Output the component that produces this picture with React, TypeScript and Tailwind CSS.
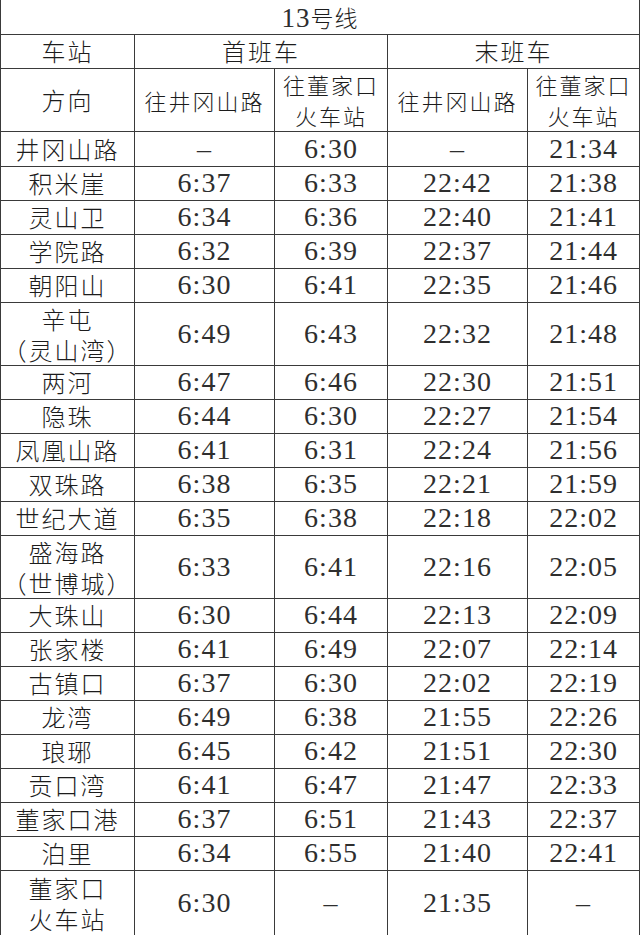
import React from 'react';

type Row = { name: string[]; times: string[]; h: string };

const DASH = '–';

const rows: Row[] = [
  { name: ['井冈山路'], times: [DASH, '6:30', DASH, '21:34'], h: 'h-[35px]' },
  { name: ['积米崖'], times: ['6:37', '6:33', '22:42', '21:38'], h: 'h-[34px]' },
  { name: ['灵山卫'], times: ['6:34', '6:36', '22:40', '21:41'], h: 'h-[34px]' },
  { name: ['学院路'], times: ['6:32', '6:39', '22:37', '21:44'], h: 'h-[34px]' },
  { name: ['朝阳山'], times: ['6:30', '6:41', '22:35', '21:46'], h: 'h-[34px]' },
  { name: ['辛屯', '（灵山湾）'], times: ['6:49', '6:43', '22:32', '21:48'], h: 'h-[62px]' },
  { name: ['两河'], times: ['6:47', '6:46', '22:30', '21:51'], h: 'h-[34px]' },
  { name: ['隐珠'], times: ['6:44', '6:30', '22:27', '21:54'], h: 'h-[34px]' },
  { name: ['凤凰山路'], times: ['6:41', '6:31', '22:24', '21:56'], h: 'h-[34px]' },
  { name: ['双珠路'], times: ['6:38', '6:35', '22:21', '21:59'], h: 'h-[34px]' },
  { name: ['世纪大道'], times: ['6:35', '6:38', '22:18', '22:02'], h: 'h-[34px]' },
  { name: ['盛海路', '（世博城）'], times: ['6:33', '6:41', '22:16', '22:05'], h: 'h-[61px]' },
  { name: ['大珠山'], times: ['6:30', '6:44', '22:13', '22:09'], h: 'h-[34px]' },
  { name: ['张家楼'], times: ['6:41', '6:49', '22:07', '22:14'], h: 'h-[34px]' },
  { name: ['古镇口'], times: ['6:37', '6:30', '22:02', '22:19'], h: 'h-[34px]' },
  { name: ['龙湾'], times: ['6:49', '6:38', '21:55', '22:26'], h: 'h-[34px]' },
  { name: ['琅琊'], times: ['6:45', '6:42', '21:51', '22:30'], h: 'h-[34px]' },
  { name: ['贡口湾'], times: ['6:41', '6:47', '21:47', '22:33'], h: 'h-[34px]' },
  { name: ['董家口港'], times: ['6:37', '6:51', '21:43', '22:37'], h: 'h-[34px]' },
  { name: ['泊里'], times: ['6:34', '6:55', '21:40', '22:41'], h: 'h-[34px]' },
  { name: ['董家口', '火车站'], times: ['6:30', DASH, '21:35', DASH], h: 'h-[66px]' },
];

const cjk = "font-['Noto_Sans_CJK_SC','Noto_Sans_CJK_JP',sans-serif] font-light";
const num = "font-['Liberation_Serif','Times_New_Roman',serif] text-[#2e2e2e]";
const cell = 'border border-[#3a3a3a] p-0 text-center align-middle leading-[24px]';

function Lines({ lines, lh }: { lines: string[]; lh: string }) {
  return (
    <div className={`flex flex-col items-center ${lh}`}>
      {lines.map((l) => (
        <span key={l}>{l}</span>
      ))}
    </div>
  );
}

export default function App() {
  return (
    <div className="w-[640px] h-[935px] overflow-hidden bg-white text-[#1c1c1c]">
      <table className="w-[639px] border-collapse table-fixed">
        <colgroup>
          <col className="w-[134px]" />
          <col className="w-[140px]" />
          <col className="w-[113px]" />
          <col className="w-[140px]" />
          <col className="w-[112px]" />
        </colgroup>
        <tbody>
          <tr className="h-[34px]">
            <td colSpan={5} className={`${cell} border-t-0 text-[23px] tracking-[1px] pt-[2px]`}>
              <span className={`${num} text-[27px]`}>13</span>
              <span className={cjk}>号线</span>
            </td>
          </tr>
          <tr className={`h-[34px] ${cjk} text-[24px] tracking-[2px]`}>
            <td className={cell}>车站</td>
            <td colSpan={2} className={cell}>首班车</td>
            <td colSpan={2} className={cell}>末班车</td>
          </tr>
          <tr className={`h-[63px] ${cjk} text-[22px] tracking-[2px]`}>
            <td className={`${cell} text-[24px]`}>方向</td>
            <td className={cell}>往井冈山路</td>
            <td className={cell}>
              <Lines lines={['往董家口', '火车站']} lh="leading-[31px]" />
            </td>
            <td className={cell}>往井冈山路</td>
            <td className={cell}>
              <Lines lines={['往董家口', '火车站']} lh="leading-[31px]" />
            </td>
          </tr>
          {rows.map((r) => (
            <tr key={r.name.join('')} className={r.h}>
              <td className={`${cell} ${cjk} text-[24px] tracking-[2px]`}>
                {r.name.length > 1 ? <Lines lines={r.name} lh="leading-[31px]" /> : r.name[0]}
              </td>
              {r.times.map((t, i) => (
                <td key={i} className={`${cell} ${num} text-[28px] tracking-[1px]`}>
                  {t}
                </td>
              ))}
            </tr>
          ))}
        </tbody>
      </table>
    </div>
  );
}
